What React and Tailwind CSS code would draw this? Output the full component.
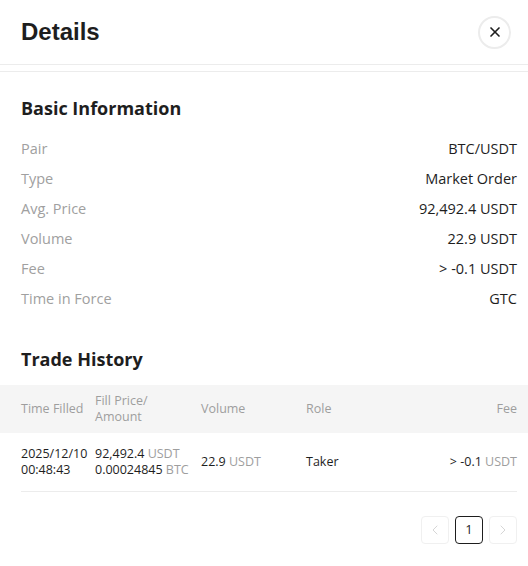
import React from 'react';
import { X, ChevronLeft, ChevronRight } from 'lucide-react';

const info = [
  ['Pair', 'BTC/USDT'],
  ['Type', 'Market Order'],
  ['Avg. Price', '92,492.4 USDT'],
  ['Volume', '22.9 USDT'],
  ['Fee', '> -0.1 USDT'],
  ['Time in Force', 'GTC'],
];

const App = () => {
  return (
    <div className="w-[528px] h-[566px] bg-white overflow-hidden text-[#1e1e1e]" style={{ fontFamily: '"Open Sans", "Noto Sans", sans-serif' }}>
      {/* Header */}
      <div className="h-[65px] flex items-center justify-between pl-[21px] pr-[17px] border-b border-[#ececec]">
        <h1 className="text-[24px] font-bold" style={{ fontFamily: '"Liberation Sans", Arial, sans-serif' }}>Details</h1>
        <button className="w-[33px] h-[33px] rounded-full border-2 border-[#ececec] flex items-center justify-center">
          <X className="w-4 h-4 text-[#1e1e1e]" strokeWidth={2.5} />
        </button>
      </div>

      <div className="mt-[6px] border-t border-[#ececec]">
        {/* Basic Information */}
        <div className="pl-[21px] pr-[11px] pt-[23px]">
          <h2 className="text-[18px] font-bold leading-[26px]">Basic Information</h2>
          <div className="mt-[13px]">
            {info.map(([label, value]) => (
              <div key={label} className="h-[30px] flex items-center justify-between text-[14.5px]">
                <span className="text-[#a0a0a0]">{label}</span>
                <span>{value}</span>
              </div>
            ))}
          </div>
          <h2 className="text-[18px] font-bold leading-[26px] mt-[32px]">Trade History</h2>
        </div>

        {/* Table */}
        <div className="mt-[13px]">
          <div className="h-[48px] bg-[#f5f5f5] pl-[21px] pr-[11px] grid grid-cols-[74px_106px_105px_1fr_auto] items-center text-[12.5px] text-[#9e9e9e] leading-[16px]">
            <span>Time Filled</span>
            <span>Fill Price/<br />Amount</span>
            <span>Volume</span>
            <span>Role</span>
            <span className="text-right">Fee</span>
          </div>
          <div className="ml-[21px] mr-[11px] h-[59px] border-b border-[#ececec] grid grid-cols-[74px_106px_105px_1fr_auto] items-center text-[12.5px] leading-[16px]">
            <span>2025/12/10<br />00:48:43</span>
            <span>
              92,492.4 <span className="text-[#9e9e9e]">USDT</span><br />
              0.00024845 <span className="text-[#9e9e9e]">BTC</span>
            </span>
            <span>22.9 <span className="text-[#9e9e9e]">USDT</span></span>
            <span>Taker</span>
            <span className="text-right">&gt; -0.1 <span className="text-[#9e9e9e]">USDT</span></span>
          </div>
        </div>

        {/* Pagination */}
        <div className="pr-[11px] mt-[24px] flex justify-end gap-[6px]">
          <button className="w-[28px] h-[28px] rounded-[4px] border border-[#f0f0f0] flex items-center justify-center">
            <ChevronLeft className="w-4 h-4 text-[#d6d6d6]" strokeWidth={1.5} />
          </button>
          <button className="w-[28px] h-[28px] rounded-[4px] border border-[#1e1e1e] flex items-center justify-center text-[13px]">
            1
          </button>
          <button className="w-[28px] h-[28px] rounded-[4px] border border-[#f0f0f0] flex items-center justify-center">
            <ChevronRight className="w-4 h-4 text-[#d6d6d6]" strokeWidth={1.5} />
          </button>
        </div>
      </div>
    </div>
  );
};

export default App;
